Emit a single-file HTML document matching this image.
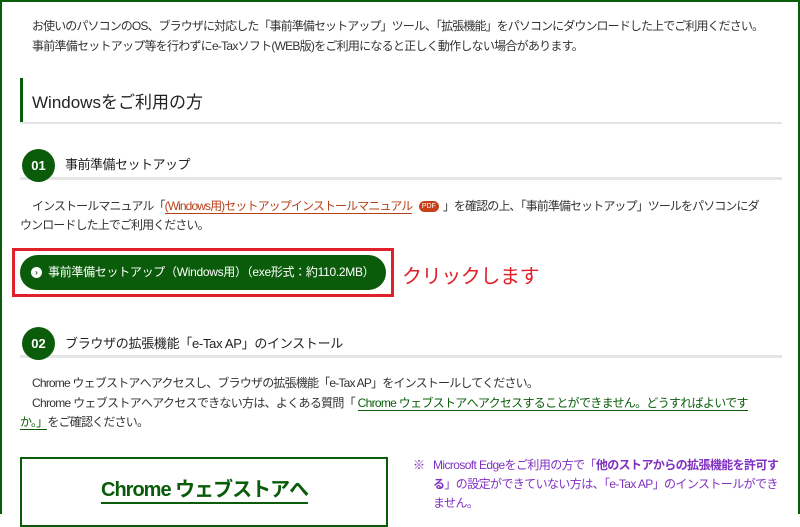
<!DOCTYPE html>
<html><head><meta charset="utf-8"><style>
body{margin:0;width:800px;height:514px;overflow:hidden;background:#fff;font-family:"Liberation Sans","Noto Sans CJK JP",sans-serif;color:#333;position:relative}
.a{position:absolute;white-space:nowrap}
.t{font-size:12px;line-height:19px}
.circ{position:absolute;width:33px;height:33px;border-radius:50%;background:#0a5c0a;color:#fff;font-weight:bold;font-size:13px;text-align:center;line-height:33px}
.line{position:absolute;left:20px;width:762px;background:#e3e6e3}
.p{color:#8030c0;letter-spacing:-0.6px}
</style></head><body>
<div class="a" style="left:0;top:0;width:800px;height:514px;border:2px solid #0a5c0a;border-bottom:none;box-sizing:border-box"></div>
<div class="a t" style="left:32px;top:17px;letter-spacing:-0.9px">お使いのパソコンのOS、ブラウザに対応した「事前準備セットアップ」ツール、「拡張機能」をパソコンにダウンロードした上でご利用ください。</div>
<div class="a t" style="left:32px;top:37px;letter-spacing:-0.75px">事前準備セットアップ等を行わずにe-Taxソフト(WEB版)をご利用になると正しく動作しない場合があります。</div>
<div class="a" style="left:20px;top:78px;width:3px;height:45px;background:#0a5c0a"></div>
<div class="a" style="left:32px;top:88px;font-size:17px;color:#222">Windowsをご利用の方</div>
<div class="line" style="top:122px;height:2px"></div>
<div class="line" style="top:177px;height:3px"></div>
<div class="circ" style="left:22px;top:149px">01</div>
<div class="a" style="left:65px;top:154px;font-size:13px;color:#222;letter-spacing:-0.5px">事前準備セットアップ</div>
<div class="a t" style="left:32px;top:197px;letter-spacing:-0.9px">インストールマニュアル「<span style="color:#b8401a;border-bottom:1px solid #b8401a">(Windows用)セットアップインストールマニュアル</span> <span style="display:inline-block;background:#c8401a;color:#fff;font-size:7px;line-height:11px;padding:0 3px;border-radius:6px;vertical-align:middle;margin:0 4px;letter-spacing:0">PDF</span>」を確認の上、「事前準備セットアップ」ツールをパソコンにダ</div>
<div class="a t" style="left:20px;top:216px;letter-spacing:-0.9px">ウンロードした上でご利用ください。</div>
<div class="a" style="left:12px;top:248px;width:382px;height:49px;border:3px solid #e0202a;box-sizing:border-box"></div>
<div class="a" style="left:20px;top:255px;width:366px;height:35px;border-radius:18px;background:#0a5c0a"></div>
<div class="a" style="left:31px;top:267px;width:11px;height:11px;border-radius:50%;background:#fff;color:#0a5c0a;font-size:8px;line-height:11px;text-align:center;font-weight:bold">›</div>
<div class="a" style="left:48px;top:263px;font-size:12px;color:#fff;letter-spacing:-0.3px">事前準備セットアップ（Windows用）（exe形式：約110.2MB）</div>
<div class="a" style="left:402px;top:260px;font-size:20px;color:#e0202a;letter-spacing:-0.4px">クリックします</div>
<div class="line" style="top:355px;height:3px"></div>
<div class="circ" style="left:22px;top:327px">02</div>
<div class="a" style="left:65px;top:333px;font-size:13px;color:#222;letter-spacing:-0.3px">ブラウザの拡張機能「e-Tax AP」のインストール</div>
<div class="a t" style="left:32px;top:374px;letter-spacing:-0.8px">Chrome ウェブストアへアクセスし、ブラウザの拡張機能「e-Tax AP」をインストールしてください。</div>
<div class="a t" style="left:32px;top:394px;letter-spacing:-0.7px">Chrome ウェブストアへアクセスできない方は、よくある質問「 <span style="color:#0a5c0a;border-bottom:1px solid #0a5c0a">Chrome ウェブストアへアクセスすることができません。どうすればよいです</span></div>
<div class="a t" style="left:20px;top:413px;letter-spacing:-0.8px"><span style="color:#0a5c0a;border-bottom:1px solid #0a5c0a">か。」</span>をご確認ください。</div>
<div class="a" style="left:20px;top:457px;width:368px;height:70px;border:2px solid #0a5c0a;box-sizing:border-box"></div>
<div class="a" style="left:101px;top:478px;font-size:20px;font-weight:bold;color:#0a5c0a;border-bottom:2px solid #0a5c0a;line-height:24px;letter-spacing:-1px">Chrome ウェブストアへ</div>
<div class="a t" style="left:413px;top:456px;color:#8030c0">※</div>
<div class="a t p" style="left:433px;top:456px">Microsoft Edgeをご利用の方で「<b>他のストアからの拡張機能を許可す</b></div>
<div class="a t p" style="left:433px;top:475px"><b>る</b>」の設定ができていない方は、「e-Tax AP」のインストールができ</div>
<div class="a t p" style="left:433px;top:494px">ません。</div>
</body></html>
